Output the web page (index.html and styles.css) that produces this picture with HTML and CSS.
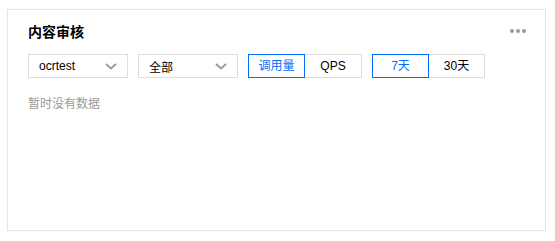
FILE: index.html
```html
<!DOCTYPE html>
<html lang="zh">
<head>
<meta charset="utf-8">
<link rel="stylesheet" href="styles.css">
</head>
<body>
<div class="card">
  <div class="title">内容审核</div>
  <div class="more"><i></i><i></i><i></i></div>
  <div class="controls">
    <div class="select"><span>ocrtest</span><svg class="chev" width="12" height="7" viewBox="0 0 12 7"><path d="M1 1 L6 5.5 L11 1" fill="none" stroke="#999" stroke-width="1.8"/></svg></div>
    <div class="select"><span>全部</span><svg class="chev" width="12" height="7" viewBox="0 0 12 7"><path d="M1 1 L6 5.5 L11 1" fill="none" stroke="#999" stroke-width="1.8"/></svg></div>
    <div class="group">
      <div class="btn active">调用量</div>
      <div class="btn">QPS</div>
    </div>
    <div class="group group-narrow">
      <div class="btn active">7天</div>
      <div class="btn">30天</div>
    </div>
  </div>
  <div class="empty">暂时没有数据</div>
</div>
</body>
</html>
```
FILE: styles.css
```css
html, body {
  margin: 0;
  padding: 0;
  background: #fff;
}
body {
  padding: 9px 0 0 7px;
  font-family: Arial, "Liberation Sans", "Noto Sans CJK SC", sans-serif;
  font-size: 12px;
  color: #000;
}
.card {
  position: relative;
  box-sizing: border-box;
  width: 539px;
  height: 222px;
  border: 1px solid #e5e5e5;
  padding: 12px 20px;
}
.title {
  font-size: 14px;
  font-weight: bold;
  line-height: 20px;
  color: #000;
}
.more {
  position: absolute;
  top: 19px;
  right: 19px;
  display: flex;
  gap: 2px;
}
.more i {
  display: block;
  width: 4px;
  height: 4px;
  border-radius: 50%;
  background: #999;
}
.controls {
  display: flex;
  margin-top: 12px;
  gap: 10px;
}
.select {
  box-sizing: border-box;
  width: 100px;
  height: 24px;
  border: 1px solid #ddd;
  display: flex;
  align-items: center;
  justify-content: space-between;
  padding: 0 10px 0 10px;
  font-size: 12px;
}
.chev {
  display: block;
}
.group {
  display: flex;
}
.btn {
  box-sizing: border-box;
  width: 57px;
  height: 24px;
  line-height: 22px;
  text-align: center;
  border: 1px solid #ddd;
  font-size: 12px;
  color: #000;
}
.btn + .btn {
  border-left: none;
}
.btn.active {
  border-color: #006eff;
  color: #006eff;
}
.group-narrow .btn:last-child {
  width: 56px;
}
.empty {
  margin-top: 17px;
  line-height: 18px;
  font-size: 12px;
  color: #999;
}
```
